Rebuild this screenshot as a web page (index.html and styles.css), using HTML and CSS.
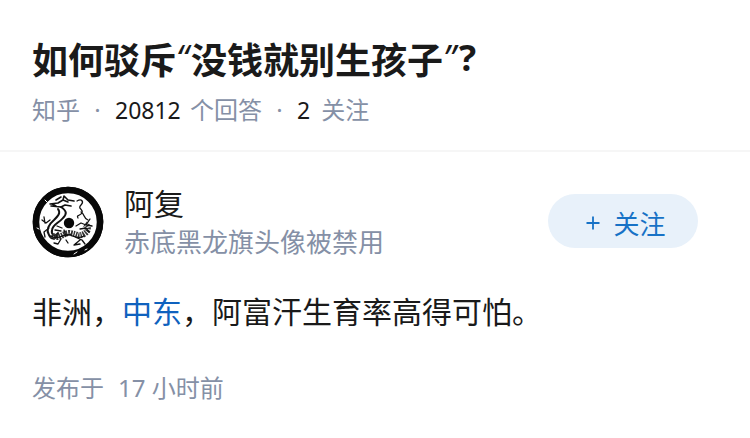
FILE: index.html
```html
<!DOCTYPE html>
<html lang="zh-CN">
<head>
<meta charset="utf-8">
<title>知乎</title>
<link rel="stylesheet" href="styles.css">
</head>
<body>
<header class="question">
  <h1 class="title">如何驳斥<span class="quote open">“</span>没钱就别生孩子<span class="quote">”</span><span class="mark">?</span></h1>
  <div class="meta"><span>知乎</span><span class="dot">·</span><span class="num answers">20812</span><span class="label">个回答</span><span class="dot">·</span><span class="num">2</span><span class="label">关注</span></div>
</header>
<main class="answer">
  <div class="author">
    <svg class="avatar" viewBox="0 0 72 72" fill="none" stroke="#111" stroke-linecap="round" stroke-linejoin="round">
      <circle cx="36" cy="36" r="32" stroke="#080808" stroke-width="6.5"/>
      <circle cx="36" cy="36" r="34.6" stroke="#080808" stroke-width="1.5" stroke-dasharray="13 1 8 .7 19 1.2"/>
      <circle cx="37" cy="37" r="5.2" fill="#080808" stroke="none"/>
      <path stroke-width="1.6" d="M18 18l8-1 5-3 1-4 4 4 6 1M19 20l10 1 4-2 6 1M24 14l5-3M31 14l5 2M20 18l4 2"/>
      <path stroke-width="2" d="M29 21c6 4 6 7 2 11-4 5-10 6-11 12-1 5 3 7 6 3M26 23c3 4 0 7-4 11-6 5-8 10-5 15 3 6 8 3 9-1"/>
      <path stroke-width="1.3" d="M45 15c5-3 7 1 4 4-4 4 3 4 1 8-2 3-6 2-4 5M49 26c4 2 2 6 7 8M10 34l4 3 4-3M12 31l1 6M17 42l-5 4 1 5"/>
      <path stroke="#333" stroke-width="6" stroke-dasharray="1.6 .9" stroke-linecap="butt" d="M20 49c7 6 12-3 18-2 8 1 8 4 14 1 5-3 5-7 1-10"/>
      <path stroke-width="1.3" d="M19 50c7 5 13-3 19-1s8 4 14 1M25 40l5 2M23 44l6 1M32 44l2 6 5-2M44 40l5-3 5 2 4-6M55 39l5 1M48 43l6-1 3 4M43 51l7 3 3 4M48 54l-6 5 6-1M29 53l-3 5-4-1M34 54l2 3"/>
      <path stroke="#fff" stroke-width="1" d="M42 68l3-2M13 14l2 2M5 42l2 1M53 64l2-1"/>
    </svg>
    <div class="who">
      <div class="name">阿复</div>
      <div class="bio">赤底黑龙旗头像被禁用</div>
    </div>
    <button class="follow" type="button"><svg class="plus" viewBox="0 0 14 14"><path d="M7 .5v13M.5 7h13"/></svg>关注</button>
  </div>
  <p class="content">非洲，<a class="link">中东</a>，阿富汗生育率高得可怕。</p>
  <div class="time"><span>发布于</span><span class="ago">17 小时前</span></div>
</main>
</body>
</html>
```
FILE: styles.css
```css
* { box-sizing: border-box; }
body {
  margin: 0;
  background: #fff;
  color: #1a1a1a;
  font-family: "Noto Sans", "Noto Sans CJK SC", sans-serif;
}
.question {
  height: 152px;
  padding: 34px 32px 0;
  border-bottom: 2px solid #f6f6f6;
}
.title {
  margin: 0;
  font-family: "Noto Sans CJK SC", sans-serif;
  font-size: 36px;
  line-height: 48px;
  font-weight: 700;
  white-space: nowrap;
  display: flex;
}
.quote {
  width: 16px;
  font-family: "Open Sans", sans-serif;
  font-weight: 400;
  font-style: italic;
}
.quote.open { width: 15px; }
.mark { font-family: "Open Sans", sans-serif; }
.meta {
  display: flex;
  margin-top: 10px;
  font-size: 24px;
  line-height: 36px;
  color: #8590a6;
  white-space: nowrap;
}
.dot { width: 35px; text-align: center; }
.num { color: #1a1a1a; font-size: 23px; }
.answers { width: 64px; }
.label { margin-left: 11px; }
.answer { padding: 34px 52px 0 32px; }
.author { display: flex; height: 76px; }
.avatar { width: 72px; height: 72px; margin-right: 20px; flex: none; }
.who { flex: 1; white-space: nowrap; }
.name {
  font-size: 30px;
  line-height: 36px;
}
.bio {
  font-size: 26px;
  line-height: 40px;
  color: #8590a6;
}
.name, .bio, .content, .time, .meta, .follow { font-weight: 400; }
.follow {
  display: flex;
  align-items: center;
  justify-content: center;
  width: 150px;
  height: 54px;
  margin-top: 8px;
  padding: 4px 0 0 6px;
  border: 0;
  border-radius: 27px;
  background: #e8f1fa;
  color: #1772c6;
  font-family: "Noto Sans CJK SC", sans-serif;
  font-size: 26px;
  line-height: 36px;
}
.plus {
  width: 14px;
  height: 14px;
  margin-right: 13px;
  fill: none;
  stroke: #1772c6;
  stroke-width: 1.8;
}
.content {
  margin: 26px 0 0;
  font-family: "Noto Sans CJK SC", sans-serif;
  font-size: 30px;
  line-height: 44px;
  white-space: nowrap;
}
.link { color: #0f62be; }
.time {
  display: flex;
  margin-top: 38px;
  font-size: 24px;
  line-height: 36px;
  color: #8590a6;
}
.ago { margin-left: 14px; }
```
